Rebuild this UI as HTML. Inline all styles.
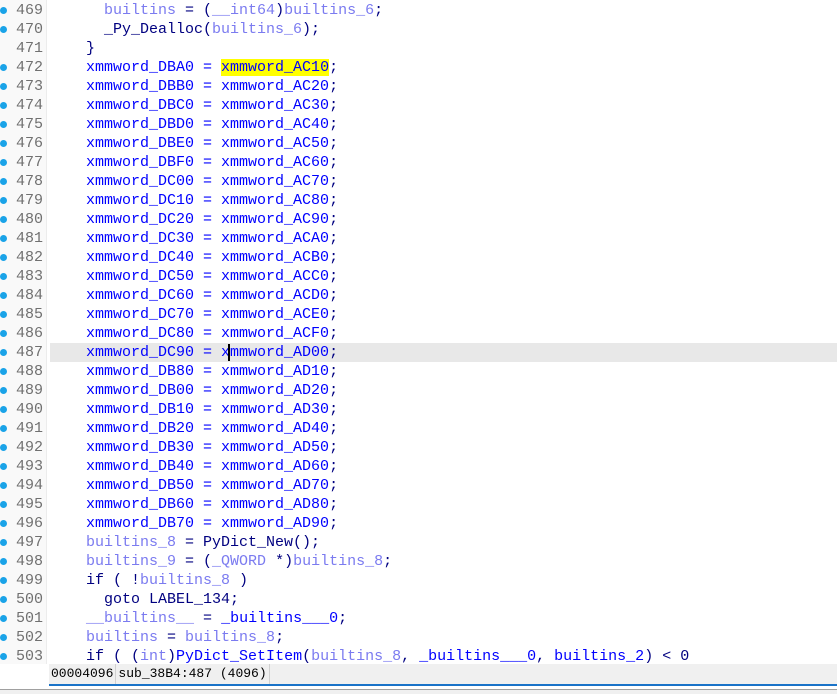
<!DOCTYPE html>
<html><head><meta charset="utf-8"><style>
body{margin:0;width:837px;height:693px;overflow:hidden;background:#fff;position:relative;font-family:"Liberation Mono",monospace;font-size:15px}
.g{position:absolute;left:0;top:0;width:46px;height:664px;background:#f9f9f9;border-right:1px solid #ececec}
.row{position:absolute;left:0;height:19px;line-height:19px;width:837px;white-space:pre}
.row .n{position:absolute;left:10px;width:33px;text-align:right;color:#707070;font-size:15px}
.row .d{position:absolute;left:0;top:6px;width:7px;height:7px;border-radius:50%;background:#1aa3e8}
.row .c{position:absolute;left:68px;color:#000080}
.v{color:#7b7bf0}.gl{color:#0000ff}.k{color:#000080}
.hl{background:#ffff00}
.sel{background:#e8e8e8}
.sb{position:absolute;left:49px;top:664px;width:788px;height:20px;background:#f0f0f0;border-bottom:2px solid #1a73c8;font-size:13px;line-height:20px;color:#000}
.sb span{display:inline-block;padding:0 2px;border-right:1px solid #d0d0d0}
.bot{position:absolute;left:0;top:689px;width:837px;height:4px;background:#f0f0f0;border-top:1px solid #a0a0a0}
</style></head><body>
<div class="g"></div>
<div id="r"></div>
<div class="sb"><span>00004096</span><span>sub_38B4:487 (4096)</span><span style="width:10px"></span></div>
<div class="bot"></div>
<script>
var L=[
[469,1,'    <span class="v">builtins</span> = (<span class="v">__int64</span>)<span class="v">builtins_6</span>;'],
[470,1,'    _Py_Dealloc(<span class="v">builtins_6</span>);'],
[471,0,'  }'],
];
var b=['AC10','AC20','AC30','AC40','AC50','AC60','AC70','AC80','AC90','ACA0','ACB0','ACC0','ACD0','ACE0','ACF0','AD00','AD10','AD20','AD30','AD40','AD50','AD60','AD70','AD80','AD90'];
var A=['DBA0','DBB0','DBC0','DBD0','DBE0','DBF0','DC00','DC10','DC20','DC30','DC40','DC50','DC60','DC70','DC80','DC90','DB80','DB00','DB10','DB20','DB30','DB40','DB50','DB60','DB70'];
for(var i=0;i<25;i++){
 var rhs=i==0?'<span class="hl">xmmword_AC10</span>':'xmmword_'+b[i];
 L.push([472+i,1,'  <span class="gl">xmmword_'+A[i]+' = '+rhs+'</span>;']);
}
L=L.concat([
[497,1,'  <span class="v">builtins_8</span> = PyDict_New();'],
[498,1,'  <span class="v">builtins_9</span> = (<span class="v">_QWORD</span> *)<span class="v">builtins_8</span>;'],
[499,1,'  if ( !<span class="v">builtins_8</span> )'],
[500,1,'    goto LABEL_134;'],
[501,1,'  <span class="v">__builtins__</span> = <span class="gl">_builtins___0</span>;'],
[502,1,'  <span class="v">builtins</span> = <span class="v">builtins_8</span>;'],
[503,1,'  if ( (<span class="v">int</span>)<span class="gl">PyDict_SetItem</span>(<span class="v">builtins_8</span>, <span class="gl">_builtins___0</span>, <span class="gl">builtins_2</span>) &lt; 0']
]);
var h='';
L.forEach(function(l,j){
 var top=j*19;
 var sel=l[0]==487?'<div class="sel" style="position:absolute;left:50px;top:0;width:787px;height:19px"></div>':'';
 var code=l[2];
 if(l[0]==487) code=code.replace('= xmmword','= x<span style="border-left:2px solid #000;margin-left:-2px"></span>mmword');
 h+='<div class="row" style="top:'+(top+1)+'px">'+sel+(l[1]?'<div class="d"></div>':'')+'<div class="n">'+l[0]+'</div><div class="c">'+code+'</div></div>';
});
document.getElementById('r').innerHTML=h;
</script>
</body></html>
